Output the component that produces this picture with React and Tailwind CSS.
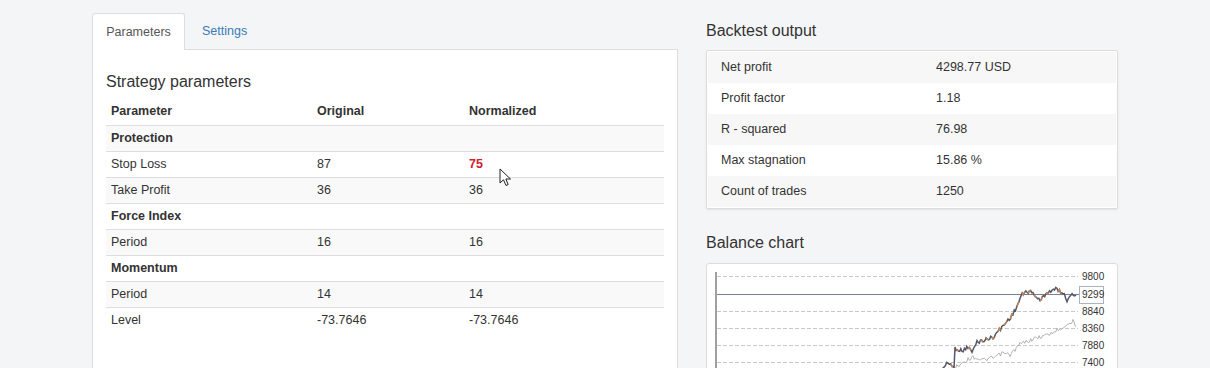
import React from "react";

const font = "font-['Liberation_Sans',Arial,sans-serif]";

const params = [
  { group: "Protection" },
  { name: "Stop Loss", orig: "87", norm: "75", red: true },
  { name: "Take Profit", orig: "36", norm: "36" },
  { group: "Force Index" },
  { name: "Period", orig: "16", norm: "16" },
  { group: "Momentum" },
  { name: "Period", orig: "14", norm: "14" },
  { name: "Level", orig: "-73.7646", norm: "-73.7646" },
];

const stats = [
  ["Net profit", "4298.77 USD"],
  ["Profit factor", "1.18"],
  ["R - squared", "76.98"],
  ["Max stagnation", "15.86 %"],
  ["Count of trades", "1250"],
];

function rand(i) {
  const x = Math.sin(i * 12.9898 + 78.233) * 43758.5453;
  return x - Math.floor(x);
}

function buildPath(keys, amp, seed) {
  const pts = [];
  let k = 0;
  for (let i = 0; i < keys.length - 1; i++) {
    const [x0, y0] = keys[i];
    const [x1, y1] = keys[i + 1];
    const steps = Math.max(1, Math.round((x1 - x0) / 1.2));
    for (let s = 0; s < steps; s++) {
      const t = s / steps;
      const x = x0 + (x1 - x0) * t;
      const y = y0 + (y1 - y0) * t + (rand(seed + k) - 0.5) * amp;
      pts.push([x, y]);
      k++;
    }
  }
  pts.push(keys[keys.length - 1]);
  return pts;
}

const OX = 707;
const OY = 263;

const priceKeys = [
  [938, 372], [944, 366], [948, 362], [952, 364], [954, 368], [955, 347],
  [962, 350], [968, 346], [972, 351], [977, 341], [985, 339], [993, 336],
  [1003, 325], [1013, 313], [1018, 303], [1021, 295], [1027, 290], [1033, 292],
  [1040, 300], [1047, 291], [1057, 288], [1063, 292], [1067, 299], [1072, 292],
  [1076, 294],
];
const greyKeys = [
  [948, 372], [953, 368], [963, 361], [973, 356], [983, 359], [993, 357],
  [1003, 352], [1010, 354], [1020, 343], [1033, 338], [1050, 333], [1063, 326],
  [1070, 322], [1073, 320], [1076, 325],
];

function toStr(pts) {
  return pts.map(([x, y]) => `${(x - OX).toFixed(1)},${(y - OY).toFixed(1)}`).join(" ");
}

function Chart() {
  const price = buildPath(priceKeys, 4, 3);
  const grey = buildPath(greyKeys, 4, 101);
  const orangeSegs = [];
  for (let i = 0; i < price.length - 3; i += 5) {
    if (rand(i + 500) > 0.35) orangeSegs.push(price.slice(i, i + 3));
  }
  const grid = [275, 310, 327, 344, 361];
  const labels = [
    [275, "9800"],
    [310, "8840"],
    [327, "8360"],
    [344, "7880"],
    [361, "7400"],
  ];
  return (
    <svg width="410" height="120" className="block">
      <line x1={716 - OX} y1={271 - OY} x2={716 - OX} y2={130} stroke="#888" strokeWidth="1.6" />
      {grid.map((y) => (
        <line key={y} x1={717 - OX} y1={y - OY + 0.5} x2={1078 - OX} y2={y - OY + 0.5} stroke="#c8c8c8" strokeWidth="1" strokeDasharray="4 2" />
      ))}
      <line x1={717 - OX} y1={293 - OY + 0.5} x2={1080 - OX} y2={293 - OY + 0.5} stroke="#7c8190" strokeWidth="1.2" />
      <polyline points={toStr(grey)} fill="none" stroke="#a9a9a9" strokeWidth="0.9" />
      <polyline points={toStr(price)} fill="none" stroke="#555868" strokeWidth="1.5" />
      {orangeSegs.map((seg, i) => (
        <polyline key={i} points={toStr(seg)} fill="none" stroke="#c98550" strokeWidth="1.4" />
      ))}
      {labels.map(([y, t]) => (
        <text key={t} x={1082 - OX} y={y - OY + 3.5} fontSize="10" fill="#333" fontFamily="Liberation Sans, Arial, sans-serif">{t}</text>
      ))}
      <rect x={1079.5 - OX} y={285.5 - OY} width="24" height="17" fill="#fff" stroke="#a8b4c4" strokeWidth="1" />
      <text x={1082 - OX} y={293 - OY + 4} fontSize="10" fill="#333" fontFamily="Liberation Sans, Arial, sans-serif">9299</text>
    </svg>
  );
}

function Cursor() {
  return (
    <svg width="14" height="20" viewBox="0 0 14 20" className="absolute left-[499px] top-[168px]">
      <path d="M1 1 L1 15 L4.5 11.8 L7 17.5 L9.2 16.5 L6.8 11 L11.5 11 Z" fill="#fff" stroke="#222" strokeWidth="1" strokeLinejoin="round" />
    </svg>
  );
}

export default function App() {
  return (
    <div className={`relative h-[368px] w-[1210px] overflow-hidden bg-[#f4f5f6] text-[#333] ${font}`}>
      <div className="ml-[92px] flex w-[1026px] gap-[28px]">
        {/* Left column */}
        <div className="w-[586px] pt-[13px]">
          <div className="flex items-end">
            <div className="relative z-10 -mb-px flex h-[37px] w-[93px] items-center justify-center rounded-t-[3px] border border-b-0 border-[#ddd] bg-white text-[12.5px] text-[#555]">
              Parameters
            </div>
            <div className="flex h-[36px] items-center pl-[17px] text-[12.5px] text-[#3a7bb8]">
              Settings
            </div>
          </div>
          <div className="h-[340px] border border-[#ddd] bg-white px-[13px]">
            <h2 className="pt-[22px] text-[16px] leading-[20px] text-[#333]">Strategy parameters</h2>
            <table className="mt-[7px] w-[558px] border-collapse text-[12.5px]">
              <colgroup>
                <col className="w-[206px]" />
                <col className="w-[152px]" />
                <col className="w-[200px]" />
              </colgroup>
              <thead>
                <tr className="h-[26px] border-b border-[#ddd] font-bold">
                  <th className="px-[5px] text-left">Parameter</th>
                  <th className="px-[5px] text-left">Original</th>
                  <th className="px-[5px] text-left">Normalized</th>
                </tr>
              </thead>
              <tbody>
                {params.map((p, i) => (
                  <tr
                    key={i}
                    className={`h-[26px] ${i < params.length - 1 ? "border-b border-[#ddd]" : ""} ${i % 2 === 0 ? "bg-[#f9f9f9]" : "bg-white"}`}
                  >
                    {p.group ? (
                      <td colSpan={3} className="px-[5px] font-bold">{p.group}</td>
                    ) : (
                      <>
                        <td className="px-[5px]">{p.name}</td>
                        <td className="px-[5px]">{p.orig}</td>
                        <td className={`px-[5px] ${p.red ? "font-bold text-[#d0202c]" : ""}`}>{p.norm}</td>
                      </>
                    )}
                  </tr>
                ))}
              </tbody>
            </table>
          </div>
        </div>

        {/* Right column */}
        <div className="w-[412px]">
          <h2 className="pt-[21px] text-[16px] leading-[20px] text-[#333]">Backtest output</h2>
          <div className="mt-[9px] rounded-[2px] border border-[#dcdcdc] bg-white p-px shadow-[0_1px_2px_rgba(0,0,0,0.08)]">
            {stats.map(([k, v], i) => (
              <div
                key={k}
                className={`flex h-[31px] items-center pb-px text-[12.5px] ${i % 2 === 0 ? "bg-[#f7f7f7]" : "bg-white"}`}
              >
                <div className="w-[228px] pl-[13px]">{k}</div>
                <div>{v}</div>
              </div>
            ))}
          </div>
          <h2 className="mt-[24px] text-[16px] leading-[20px] text-[#333]">Balance chart</h2>
          <div className="mt-[10px] h-[140px] rounded-[3px] border border-[#dcdcdc] bg-white p-0">
            <Chart />
          </div>
        </div>
      </div>
      <Cursor />
    </div>
  );
}
